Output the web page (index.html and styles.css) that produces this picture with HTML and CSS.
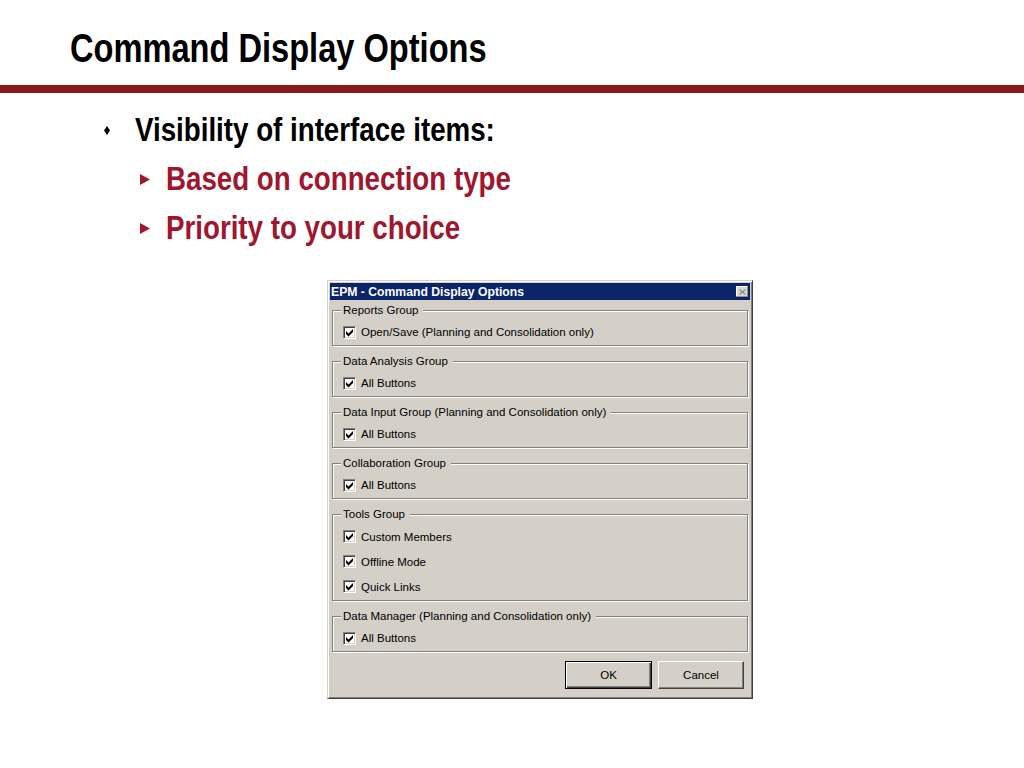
FILE: index.html
```html
<!DOCTYPE html>
<html lang="en">

<head>
    <meta charset="UTF-8">
    <meta name="viewport" content="width=device-width, initial-scale=1.0">
    <title>Command Display Options</title>
    <link rel="stylesheet" href="styles.css">
</head>

<body>
    <div class="slide">
        <h1 class="slide-title"><span class="narrow">Command Display Options</span></h1>
        <div class="title-rule"></div>

        <ul class="points">
            <li class="point"><span class="diamond"></span><span class="narrow">Visibility of interface items:</span></li>
            <li class="sub-point"><span class="arrow"></span><span class="narrow">Based on connection type</span></li>
            <li class="sub-point"><span class="arrow"></span><span class="narrow">Priority to your choice</span></li>
        </ul>

        <div class="dialog">
            <div class="titlebar">
                <span class="caption">EPM - Command Display Options</span>
                <span class="close-btn">
                    <svg width="7" height="6" viewBox="0 0 7 6"><path d="M0.5 0.5 L6.5 5.5 M6.5 0.5 L0.5 5.5" stroke="#8a8a8a" stroke-width="1.3" fill="none"/></svg>
                </span>
            </div>

            <div class="dialog-body">
                <fieldset class="group">
                    <legend>Reports Group</legend>
                    <label class="check"><span class="box"><svg width="11" height="11" viewBox="0 0 11 11"><polygon points="2,4 4.5,6.5 9,2 9,5 4.5,9.5 2,7" fill="#000"/></svg></span>Open/Save (Planning and Consolidation only)</label>
                </fieldset>

                <fieldset class="group">
                    <legend>Data Analysis Group</legend>
                    <label class="check"><span class="box"><svg width="11" height="11" viewBox="0 0 11 11"><polygon points="2,4 4.5,6.5 9,2 9,5 4.5,9.5 2,7" fill="#000"/></svg></span>All Buttons</label>
                </fieldset>

                <fieldset class="group">
                    <legend>Data Input Group (Planning and Consolidation only)</legend>
                    <label class="check"><span class="box"><svg width="11" height="11" viewBox="0 0 11 11"><polygon points="2,4 4.5,6.5 9,2 9,5 4.5,9.5 2,7" fill="#000"/></svg></span>All Buttons</label>
                </fieldset>

                <fieldset class="group">
                    <legend>Collaboration Group</legend>
                    <label class="check"><span class="box"><svg width="11" height="11" viewBox="0 0 11 11"><polygon points="2,4 4.5,6.5 9,2 9,5 4.5,9.5 2,7" fill="#000"/></svg></span>All Buttons</label>
                </fieldset>

                <fieldset class="group tools">
                    <legend>Tools Group</legend>
                    <label class="check"><span class="box"><svg width="11" height="11" viewBox="0 0 11 11"><polygon points="2,4 4.5,6.5 9,2 9,5 4.5,9.5 2,7" fill="#000"/></svg></span>Custom Members</label>
                    <label class="check"><span class="box"><svg width="11" height="11" viewBox="0 0 11 11"><polygon points="2,4 4.5,6.5 9,2 9,5 4.5,9.5 2,7" fill="#000"/></svg></span>Offline Mode</label>
                    <label class="check"><span class="box"><svg width="11" height="11" viewBox="0 0 11 11"><polygon points="2,4 4.5,6.5 9,2 9,5 4.5,9.5 2,7" fill="#000"/></svg></span>Quick Links</label>
                </fieldset>

                <fieldset class="group">
                    <legend>Data Manager (Planning and Consolidation only)</legend>
                    <label class="check"><span class="box"><svg width="11" height="11" viewBox="0 0 11 11"><polygon points="2,4 4.5,6.5 9,2 9,5 4.5,9.5 2,7" fill="#000"/></svg></span>All Buttons</label>
                </fieldset>

                <div class="actions">
                    <button class="btn btn-default">OK</button>
                    <button class="btn">Cancel</button>
                </div>
            </div>
        </div>
    </div>
</body>

</html>
```

FILE: styles.css
```css
body {
    margin: 0;
    background-color: #fff;
    font-family: "Liberation Sans", Arial, sans-serif;
}

/* no narrow face installed, so squeeze the bold sans */
.narrow {
    display: inline-block;
    white-space: nowrap;
    transform: scaleX(0.815);
    transform-origin: 0 50%;
}

.slide-title {
    margin: 0;
    padding: 24px 0 0 70px;
    font-size: 40px;
    line-height: 48px;
    font-weight: bold;
    color: #000;
}

.title-rule {
    height: 8px;
    margin-top: 13px;
    background-color: #861a17;
}

.points {
    list-style: none;
    margin: 12px 0 0;
    padding: 0 0 0 104px;
    font-size: 34px;
    font-weight: bold;
}

.point,
.sub-point {
    display: flex;
    align-items: center;
    height: 49px;
    line-height: 49px;
}

.point {
    color: #000;
}

.sub-point {
    padding-left: 36px;
    color: #a0162e;
}

.diamond {
    flex: none;
    width: 6px;
    height: 9px;
    margin: 2px 25px 0 0;
    background-color: #000;
    clip-path: polygon(50% 0, 100% 50%, 50% 100%, 0 50%);
}

.arrow {
    flex: none;
    width: 10px;
    height: 11px;
    margin: 2px 16px 0 0;
    background-color: #a0162e;
    clip-path: polygon(0 0, 100% 50%, 0 100%);
}

/* classic windows dialog */
.dialog {
    width: 426px;
    margin: 28px 0 0 327px;
    box-sizing: border-box;
    padding: 2px;
    background-color: #d4d0c8;
    border: 1px solid;
    border-color: #d4d0c8 #404040 #404040 #d4d0c8;
    box-shadow: inset 1px 1px #fff, inset -1px -1px #808080;
    font-size: 11.5px;
    color: #000;
}

.titlebar {
    display: flex;
    align-items: center;
    justify-content: space-between;
    height: 17px;
    padding: 0 2px 0 1px;
    background-color: #0a246a;
    color: #fff;
    font-weight: bold;
    font-size: 12.2px;
}

.close-btn {
    display: flex;
    align-items: center;
    justify-content: center;
    width: 12px;
    height: 11px;
    background-color: #dcd9d3;
    box-shadow: inset -1px -1px #909090, inset 1px 1px #fff;
}

.dialog-body {
    padding: 3px 0 7px;
}

.group {
    margin: 8px 2px 0;
    padding: 3px 8px 1px;
    min-width: 0;
    border: 1px solid #808080;
    box-shadow: 1px 1px 0 #fff, inset 1px 1px 0 #fff;
}

.group:first-child {
    margin-top: 0;
}

.group legend {
    padding: 0 5px 0 2px;
    line-height: 14px;
    background-color: #d4d0c8;
}

.check {
    display: flex;
    align-items: center;
    height: 24px;
    margin-left: 2px;
}

.tools .check {
    height: 25px;
}

.box {
    display: flex;
    flex: none;
    width: 13px;
    height: 13px;
    box-sizing: border-box;
    margin-right: 5px;
    background-color: #fff;
    border: 1px solid;
    border-color: #808080 #fff #fff #808080;
    box-shadow: inset 1px 1px #404040, inset -1px -1px #d4d0c8;
}

.actions {
    display: flex;
    justify-content: flex-end;
    gap: 6px;
    margin-top: 9px;
    padding-right: 6px;
}

.btn {
    width: 86px;
    height: 28px;
    padding: 0;
    font-family: inherit;
    font-size: 11.5px;
    color: #000;
    background-color: #d4d0c8;
    border: 1px solid;
    border-color: #fff #404040 #404040 #fff;
    box-shadow: inset -1px -1px #808080;
}

.btn-default {
    width: 87px;
    border-color: #000;
    box-shadow: inset 1px 1px #fff, inset -1px -1px #404040, inset -2px -2px #808080;
}
```
